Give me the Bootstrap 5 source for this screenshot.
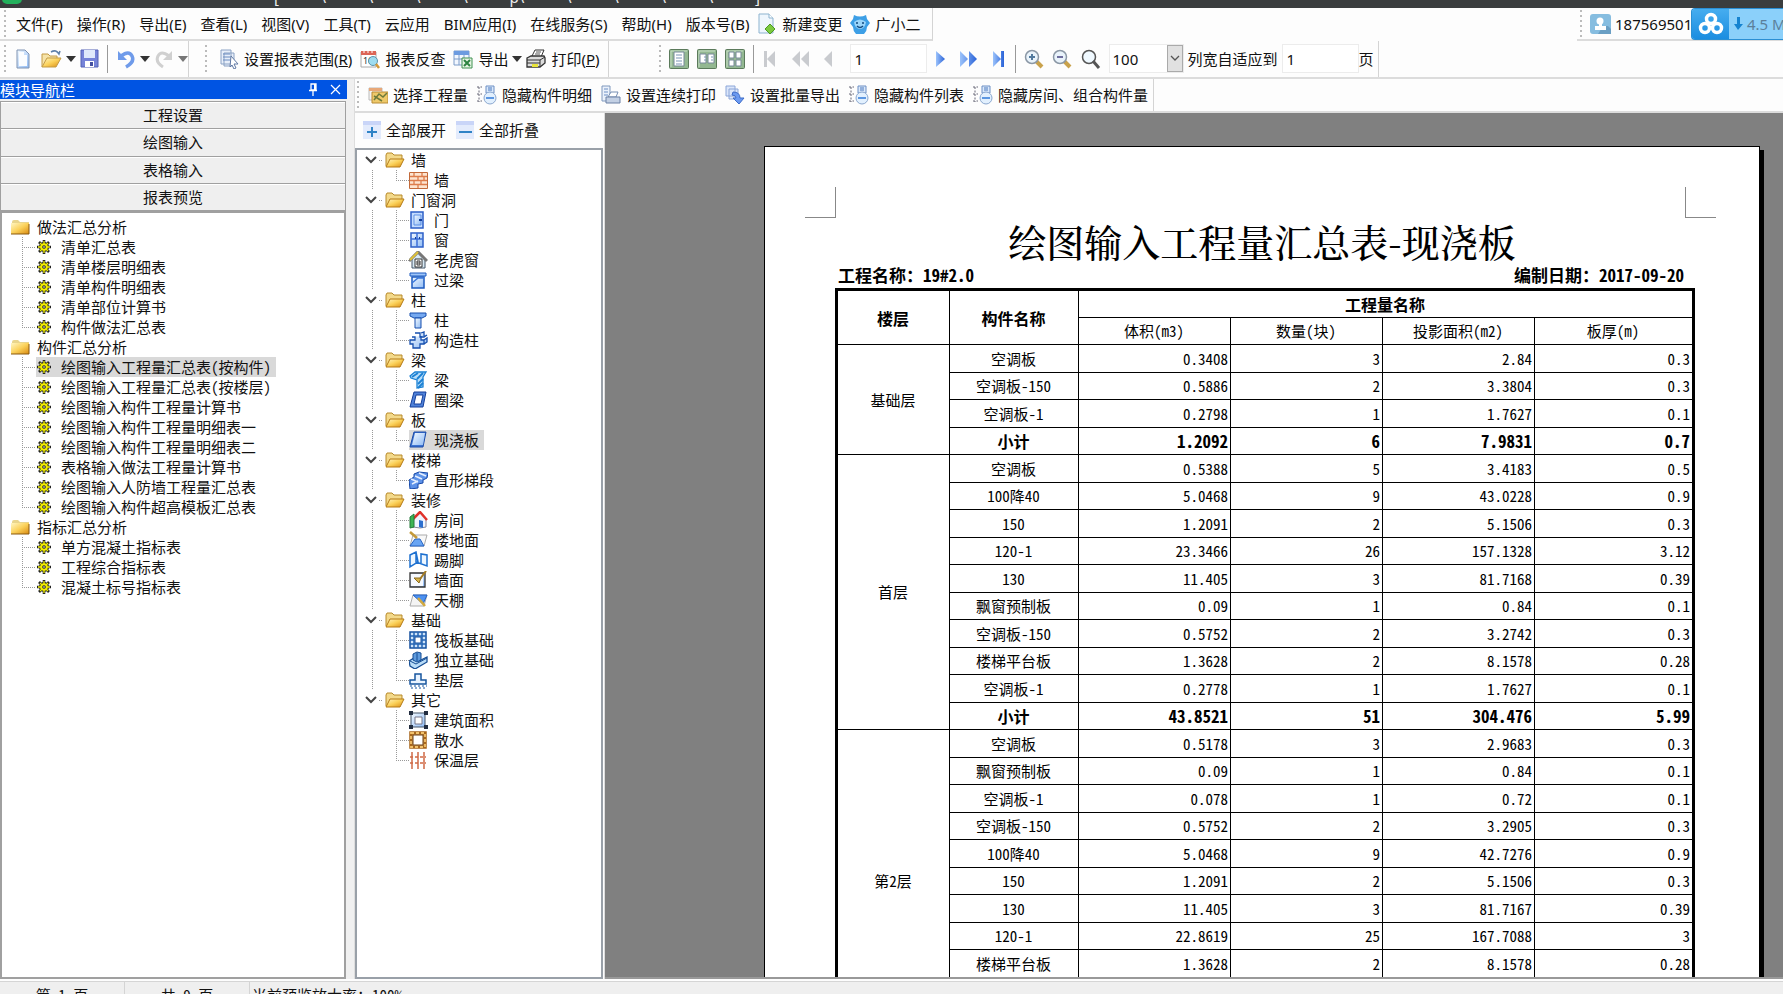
<!DOCTYPE html>
<html lang="zh-CN">
<head>
<meta charset="utf-8">
<meta name="viewport" content="width=device-width, initial-scale=1">
<title>报表预览</title>
<link href="https://cdn.jsdelivr.net/npm/bootstrap@5.3.0/dist/css/bootstrap.min.css" rel="stylesheet">
<style>
  :root { --ui: "Noto Sans", "Noto Sans CJK SC", sans-serif; --song: "Noto Sans Mono CJK SC", "Noto Sans CJK SC", sans-serif; --line: #d4d4d4; }
  body { font: 15px/20px var(--ui); color: #111; background: #fdfdfd; overflow: hidden; }
  button { font: inherit; color: inherit; background: none; border: 0; padding: 0; white-space: nowrap; }
  svg { display: block; flex: none; }
  .app { height: calc(100vh + 14px); }
  .titlebar { height: 8px; background: #3a3d3e; color: #eee; overflow: hidden; padding-left: 2px; flex: none; }
  .titlebar .logo { width: 20px; height: 20px; margin-top: -16px; border-radius: 5px; background: #23b05c; }
  .titlebar .path { margin: -13px 0 0 252px; width: 486px; line-height: 20px; }
  .bar { flex: none; }
  .menubar { height: 33px; }
  .toolbar { height: 38px; border-bottom: 2px solid #dcdcdc; }
  .toolbar .strip { padding-bottom: 1px; }
  .strip { border-right: 1px solid var(--line); height: 100%; }
  .menubar .strip { border-bottom: 2px solid #dcdcdc; }
  .grip { width: 2px; height: 28px; flex: none; background: repeating-linear-gradient(#bbb 0 2px, transparent 2px 5px); }
  .menus { gap: 14px; padding-left: 10px; }
  .tool { display: flex; align-items: center; gap: 5px; }
  .view-group { padding-left: 50px; }
  .sep { width: 1px; height: 28px; background: #999; flex: none; }
  .caret { width: 0; height: 0; border: 5px solid transparent; border-top: 6px solid #333; border-bottom: 0; }
  .caret.dim { border-top-color: #777; }
  .field { border: 1px solid #ececec; height: 29px; width: 77px; padding: 0 4px; background: #fff; font: inherit; color: #111; border-radius: 0; }
  select.field { width: 75px; appearance: none; padding: 0 3px; background: #fff url("data:image/svg+xml,%3Csvg xmlns='http://www.w3.org/2000/svg' width='16' height='27'%3E%3Crect x='.5' y='.5' width='15' height='26' fill='%23e1e1e1' stroke='%23aaa'/%3E%3Cpath d='M4 11l4 4 4-4' fill='none' stroke='%23555' stroke-width='1.3'/%3E%3C/svg%3E") right 0 / 16px 27px no-repeat; }
  .disk { width: 92px; height: 32px; border-radius: 4px 0 0 4px; overflow: hidden; background: #8bd0fa; border: 1px solid #2a8fd4; border-right: 0; color: #5b7f9a; }
  .disk-logo { width: 37px; height: 100%; background: linear-gradient(#46adef, #1b8de0); flex: none; }
  .account { width: 206px; flex: none; border-bottom: 2px solid #dcdcdc; height: 100%; padding-left: 3px; }
  .account .number { width: 76px; overflow: visible; }
  .workspace { background: #f0f0f0; min-height: 0; }
  .side { width: 347px; flex: none; font-family: var(--song); padding-top: 1px; }
  .side-head { height: 19px; background: #0054e3; color: #fff; line-height: 18px; padding-right: 6px; gap: 12px; }
  .sections { display: grid; grid-template-rows: repeat(4, 1fr); height: 110px; margin: 2px 1px 0 0; border: 1px solid #a0a0a0; border-bottom-width: 0; }
  .sections button { border-bottom: 1px solid #a0a0a0; background: #efefef; box-shadow: inset 0 1px #fff; }
  .side-tree { border: 2px solid #a0a0a0; background: #fff; margin-right: 1px; padding: 4px 0 0 9px; min-height: 0; }
  .tree, .tree ul { list-style: none; margin: 0; padding: 0; }
  .tree-row { display: flex; align-items: center; height: 20px; white-space: nowrap; }
  .tree-row button { display: flex; align-items: center; height: 20px; }
  .branch { width: 14px; height: 20px; flex: none; background: repeating-linear-gradient(#999 0 1px, transparent 1px 2px) 0 0 / 1px 100% no-repeat, repeating-linear-gradient(90deg, #999 0 1px, transparent 1px 2px) 0 10px / 100% 1px no-repeat; }
  li:last-child > .branch { background-size: 1px 10px, 100% 1px; }
  .side-tree ul ul { padding-left: 11px; }
  .side-tree ul ul button { gap: 10px; padding: 0 5px 0 1px; }
  .side-tree .folder { gap: 7px; }
  .picked { background: #d9d9d9; }
  .work { margin-left: 7px; background: #fdfdfd; min-width: 0; border-left: 1px solid #ddd; }
  .toolbar3 { height: 34px; border-bottom: 2px solid #dcdcdc; padding-left: 2px; }
  .toolbar3 .tools { gap: 9px; padding: 0 5px 0 9px; }
  .panes { min-height: 0; }
  .parts { width: 250px; flex: none; border-right: 1px solid #ddd; }
  .parts-bar { height: 35px; padding: 0 0 2px 8px; gap: 10px; flex: none; }
  .parts-tree { border: 2px solid #99a0a8; background: #fff; padding: 0 0 0 8px; font-family: var(--song); margin-right: 1px; min-height: 0; overflow: hidden; }
  .parts-tree .folder { gap: 6px; }
  .chev { width: 12px; margin-right: 2px; }
  .stub { width: 4px; height: 1px; background: repeating-linear-gradient(90deg, #999 0 1px, transparent 1px 2px); margin-right: -2px; }
  .parts-tree ul ul { margin-left: 7px; padding-left: 24px; background: repeating-linear-gradient(#999 0 1px, transparent 1px 2px) 0 0 / 1px 100% no-repeat; }
  .parts-tree > ul > li:last-child ul { background: none; }
  .parts-tree ul ul button { gap: 6px; padding-right: 5px; margin-left: -1px; }
  .canvas { background: #808080; padding: 33px 19px 0 159px; min-width: 0; overflow: hidden; border-bottom: 2px solid #999; }
  .sheet { background: #fff; border: 1px solid #000; margin-right: 4px; box-shadow: 4px 4px 0 #000; height: 1200px; font-family: var(--song); color: #000; padding-top: 40px; }
  .marks { padding: 0 43px 0 40px; }
  .marks i { width: 31px; height: 31px; border: solid #888; border-width: 0 1px 1px 0; }
  .marks i + i { border-width: 0 0 1px 1px; }
  .sheet h1 { font: 500 38px/46px "Noto Serif CJK SC", "Noto Sans CJK SC", sans-serif; margin: 0; text-align: center; white-space: nowrap; }
  .meta { font-size: 17px; font-weight: 700; line-height: 22px; padding: 0 75px 0 73px; }
  .report { table-layout: fixed; width: calc(100% - 134px); margin: 2px 0 0 70px; border-collapse: collapse; border: 3px solid #000; }
  .report th, .report td { border: 1px solid #000; padding: 0 2px 0 1px; line-height: 20px; text-align: right; font-weight: 400; white-space: nowrap; }
  .report tr { height: 27px; }
  .report tr:nth-child(odd) { height: 28px; }
  .report thead th, .report tbody th, .report .floor { text-align: center; }
  .report thead tr:first-child th, .report .sum > * { font-weight: 700; font-size: 16px; }
  .report .sum > td { font-size: 17px; }
  .statusbar { height: 27px; background: #efefef; border-top: 1px solid #d5d5d5; font-family: var(--song); flex: none; margin-top: 2px; }
  .statusbar span { width: 125px; padding-top: 3px; text-align: center; border-right: 1px solid var(--line); height: 100%; }
  .statusbar span:last-child { width: auto; border: 0; padding-left: 2px; }
</style>
</head>
<body>
<svg width="0" height="0" class="position-absolute" aria-hidden="true">
  <defs>
    <linearGradient id="gold" x1="0" y1="0" x2="1" y2="1"><stop offset="0" stop-color="#fff6c4"/><stop offset=".5" stop-color="#fbd15a"/><stop offset="1" stop-color="#d98a10"/></linearGradient>
    <linearGradient id="blue" x1="0" y1="0" x2="1" y2="1"><stop offset="0" stop-color="#f4faff"/><stop offset="1" stop-color="#8fbbf5"/></linearGradient>
    <linearGradient id="arrow" x1="0" y1="0" x2="1" y2="0"><stop offset="0" stop-color="#9cc3fb"/><stop offset="1" stop-color="#2a63d8"/></linearGradient>
    <symbol id="closed" viewBox="0 0 19 16"><path d="M1 3q0-2 2-2h4l2 2h9v11H1z" fill="#e9d58c"/><path d="M0 4h18v11H0z" fill="url(#gold)"/><path d="M0 15h18V5" fill="none" stroke="#8a5a10"/></symbol>
    <symbol id="open" viewBox="0 0 20 16"><path d="M1 14V3l1-2h5l2 2h8v4" fill="#f3d98a" stroke="#b88a2a"/><path d="M1 15L5 7h14l-4 8z" fill="url(#gold)" stroke="#b47b18"/></symbol>
    <symbol id="gear" viewBox="0 0 14 14"><path d="M7 0v14M0 7h14M2 2l10 10M12 2L2 12" stroke="#222" stroke-width="2.6"/><circle cx="7" cy="7" r="5" fill="#222"/><path d="M7 1v12M1 7h12M3 3l8 8M11 3l-8 8" stroke="#ee0" stroke-width="1.3"/><circle cx="7" cy="7" r="3.8" fill="#f4ef00"/><circle cx="7" cy="7" r="1.8" fill="#222"/><circle cx="7" cy="7" r=".8" fill="#fff"/></symbol>
    <symbol id="chevron" viewBox="0 0 12 8"><path d="M1 1l5 5 5-5" fill="none" stroke="#444" stroke-width="2"/></symbol>
    <symbol id="wall" viewBox="0 0 19 18"><path d="M.5 1.500h18v16H.5z" fill="#fde5d0" stroke="#c26a3a"/><path d="M1 5.500h17M1 9.500h17M1 13.500h17M5 2v4M13 2v4M9 6v4M15 6v4M5 10v4M12 10v4M9 14v3" stroke="#dd7d4b" stroke-width="1.300"/></symbol>
    <symbol id="door" viewBox="0 0 19 18"><path d="M2 1h12v16H2z" fill="#c5ddff" stroke="#2c5fc8" stroke-width="1.500"/><path d="M5 4h7v10H5z" fill="url(#blue)" stroke="#5d8fe4"/><path d="M10 9h3" stroke="#123f9c" stroke-width="2"/></symbol>
    <symbol id="window" viewBox="0 0 19 18"><path d="M2 2h12v14H2z" fill="url(#blue)" stroke="#2c5fc8" stroke-width="1.500"/><path d="M8 2v14M2 8h12" stroke="#3c6fd8" stroke-width="1.500"/><path d="M6 7h1M10 7h1" stroke="#123f9c" stroke-width="2"/></symbol>
    <symbol id="dormer" viewBox="0 0 19 18"><path d="M3 8l6-6 7 6v9H3z" fill="#d8e9f4" stroke="#456"/><path d="M0 10l9-9 9 9" fill="none" stroke="#777" stroke-width="3"/><path d="M1 9l8-8" stroke="#dfc23a" stroke-width="2"/><path d="M6 8h7v8H6zM8 10h3v4H8zM8 12h3" fill="#fff" stroke="#333"/></symbol>
    <symbol id="lintel" viewBox="0 0 19 18"><path d="M1 2h16v3H1z" fill="#9ec5f8" stroke="#1d5bc0"/><path d="M3 6h12v11H3z" fill="url(#blue)" stroke="#1d5bc0" stroke-width="1.500"/><path d="M3 12l6-5h6" stroke="#3b78da" fill="none" stroke-width="1.500"/></symbol>
    <symbol id="column" viewBox="0 0 19 18"><path d="M1 2h16v3l-4 2H5L1 5z" fill="#76a9f0" stroke="#164fae"/><path d="M6 7h6v10H6z" fill="url(#blue)" stroke="#164fae"/></symbol>
    <symbol id="tiecol" viewBox="0 0 19 18"><path d="M6 2h5v4h4l3-2M3 6h3v3H1v4h3v4h7v-4h4V9h-3V5M12 2l3-1v4M15 9l3-2v4l-3 2" fill="url(#blue)" stroke="#164fae" stroke-width="1.300"/></symbol>
    <symbol id="beam" viewBox="0 0 19 18"><path d="M1 5l5-4h11l-3 5v10l-6 1V9L2 7z" fill="#b8ddfa" stroke="#1b81d4" stroke-width="1.300"/><path d="M3 6l6-4M8 8l6-6M9 13l5-5M9 17l5-5" stroke="#1b81d4" stroke-width="1.800"/></symbol>
    <symbol id="ring" viewBox="0 0 19 18"><path d="M5 1h12l-3 15H1z" fill="#4f81d8" stroke="#153f9a"/><path d="M7 4h7l-2 9H5z" fill="#fff" stroke="#153f9a"/></symbol>
    <symbol id="slab" viewBox="0 0 19 18"><path d="M5 1h12l-3 15H1z" fill="#3d74d2" stroke="#1b4ba8"/><path d="M6 2h10l-2 12H3z" fill="url(#blue)"/></symbol>
    <symbol id="stair" viewBox="0 0 19 18"><path d="M0 9l5-3V3l5-2 9 1-1 5-4 2v3l-5 1v4L1 18z" fill="#5e92e8" stroke="#1648a8"/><path d="M2 8l7 3M6 5l7 3M10 2l7 3M3 13l6-3" stroke="#e6f0ff" stroke-width="1.500"/></symbol>
    <symbol id="room" viewBox="0 0 19 18"><path d="M4 8l7-6 6 6v8l-6 1-7-1z" fill="#eef4ff" stroke="#889"/><path d="M3 9l8-8 7 8" fill="none" stroke="#e0312a" stroke-width="2.500"/><path d="M1 6l4-3v13l-4 1z" fill="#3db554" stroke="#24793a"/><path d="M10 9l4 1v7l-4-1z" fill="#2d6fce"/></symbol>
    <symbol id="floor" viewBox="0 0 19 18"><path d="M4 4h14l-3 11H1z" fill="#f8f8f8" stroke="#aaa"/><path d="M1 15l5-7h5l4 7z" fill="#69a5f3" stroke="#2463c4"/><path d="M1 1l7 6" stroke="#c49a3a" stroke-width="2.500"/></symbol>
    <symbol id="skirt" viewBox="0 0 19 18"><path d="M1 4l6-3 2 10-8 5zM7 1v10l11 4V4l-6-1v9" fill="#eef7ff" stroke="#1d70d0" stroke-width="1.500"/></symbol>
    <symbol id="face" viewBox="0 0 19 18"><path d="M1 2h15v14H1z" fill="url(#blue)" stroke="#333" stroke-width="1.300"/><path d="M2 3h12v12H2z" fill="#f6f9ff"/><path d="M5 7l5 5 2-5z" fill="#d6b24b" stroke="#8b6b1e"/><path d="M11 8l6-8" stroke="#a57c24" stroke-width="2"/></symbol>
    <symbol id="ceil" viewBox="0 0 19 18"><path d="M4 4h14l-3 11H1z" fill="#f4f4f4" stroke="#aaa"/><path d="M4 4h14l-4 9z" fill="#4e92f0" stroke="#2463c4"/><path d="M9 7l7 8" stroke="#d3a93d" stroke-width="2.500"/></symbol>
    <symbol id="raft" viewBox="0 0 19 18"><path d="M1 1h16v16H1z" fill="#cfe4fa" stroke="#134f9e" stroke-width="1.500"/><path d="M5 1v16M13 1v16M1 5h16M1 13h16M9 1v4M9 13v4M1 9h4M13 9h4" stroke="#2464b4" stroke-width="1.500"/><path d="M6 6h6v6H6z" fill="#fff" stroke="#134f9e"/></symbol>
    <symbol id="pad" viewBox="0 0 19 18"><path d="M0 10l5-3 5 3 8-4v5L6 18l-5-3z" fill="#b9dcf7" stroke="#154d94" stroke-width="1.300"/><path d="M4 3l4-2 4 1v7l-4 2-4-2zM8 2v8" fill="#5f9bdd" stroke="#154d94"/><path d="M1 10l6 3 11-6" fill="none" stroke="#154d94"/></symbol>
    <symbol id="cushion" viewBox="0 0 19 18"><path d="M6 3h6v6h5v4H1V9h5z" fill="#eaf4ff" stroke="#17559f" stroke-width="1.500"/><path d="M1 15h17M2 17h16" stroke="#17559f" stroke-dasharray="2 2"/></symbol>
    <symbol id="area" viewBox="0 0 19 18"><path d="M2 2h14v14H2z" fill="url(#blue)" stroke="#456"/><path d="M6 6h7v7H6z" fill="#fff" stroke="#778"/><path d="M0 0h4v4H0zM15 0h4v4h-4zM0 14h4v4H0zM15 14h4v4h-4z" fill="#222d40"/></symbol>
    <symbol id="apron" viewBox="0 0 19 18"><path d="M2 2h14v14H2z" fill="#fff" stroke="#a8661a" stroke-width="3.500"/><path d="M2 2h14v14H2z" fill="none" stroke="#f2c26c" stroke-width="1.800" stroke-dasharray="3 2"/><path d="M4 4h10v10H4z" fill="none" stroke="#70410c"/></symbol>
    <symbol id="insul" viewBox="0 0 19 18"><path d="M3 1v17M9 1v17M15 1v17" stroke="#cf6a45" stroke-width="1.500"/><path d="M1 6h16M1 12h16" stroke="#cf6a45" stroke-dasharray="3 2" stroke-width="1.500"/></symbol>
    <symbol id="hide" viewBox="0 0 20 20"><path d="M0 2h5M0 9h5M0 16h5M2 2v15" stroke="#667" stroke-dasharray="2 1.500"/><path d="M9 1h8v7H9z" fill="#dbe9fb" stroke="#6d8fc4"/><path d="M11 3h4M11 5h4" stroke="#4b78bd"/><circle cx="13" cy="13" r="6" fill="#e2f0fe" stroke="#8aa7cf"/><path d="M9 13h8" stroke="#2f7ad8" stroke-width="1.500"/></symbol>
    <symbol id="glass" viewBox="0 0 20 20"><path d="M12 12l6 6" stroke="#c9a24c" stroke-width="4"/><circle cx="8" cy="8" r="6.500" fill="#e9f3fb" stroke="#8a97a5" stroke-width="1.500"/></symbol>
    <symbol id="sheetbg" viewBox="0 0 20 20"><rect x=".5" y=".5" width="19" height="19" rx="1" fill="#93b891" stroke="#5b7a5b"/><path d="M2 18V2h16" stroke="#c7dec5" fill="none"/></symbol>
  </defs>
</svg>

<div class="app d-flex flex-column">
  <header class="titlebar d-flex">
    <div class="logo"></div>
    <div class="path d-flex justify-content-between"><span>[</span><span>\</span><span>\</span><span>\</span><span>\</span><span>p\</span><span>\</span><span>\</span><span>\</span><span>\</span><span>]</span></div>
  </header>

  <nav class="bar menubar d-flex justify-content-between">
    <div class="strip d-flex align-items-center ps-1 pe-2">
      <span class="grip"></span>
      <div class="menus d-flex align-items-center">
        <button>文件(F)</button><button>操作(R)</button><button>导出(E)</button><button>查看(L)</button><button>视图(V)</button><button>工具(T)</button><button>云应用</button><button>BIM应用(I)</button><button>在线服务(S)</button><button>帮助(H)</button><button>版本号(B)</button>
      </div>
      <button class="tool ms-2"><svg width="20" height="22" viewBox="0 0 20 22"><path d="M2 1h10l4 4v15H2z" fill="#eef6fd" stroke="#8db3cf"/><path d="M12 1v4h4" fill="#fff" stroke="#8db3cf"/><path d="M13 11l5 5-5 5-5-5z" fill="#7cc93f" stroke="#4c9a23"/></svg>新建变更</button>
      <button class="tool ms-2 me-1"><svg width="20" height="22" viewBox="0 0 20 22"><path d="M4 2q6 3 12 0l1 4 3 4-3 4q0 4-3 7H6q-3-3-3-7L0 10l3-4z" fill="#3d9fe6"/><path d="M4 9q6-5 12 0-1 7-6 7T4 9z" fill="#9bd5fa"/><path d="M7 9v2M13 9v2M7 13q3 3 6 0" stroke="#124a80" stroke-width="1.500" fill="none"/></svg>广小二</button>
    </div>
    <div class="account d-flex align-items-center">
      <span class="grip"></span>
      <svg class="ms-2 me-1" width="21" height="20" viewBox="0 0 21 20"><rect width="21" height="20" rx="3" fill="#86bde0"/><path d="M13 12h5l3 3v5H8z" fill="#6a9fc4"/><circle cx="10" cy="7" r="3.500" fill="#fff"/><path d="M9 9h3v4H9zM5 12h11v4H5z" fill="#fff"/></svg>
      <span class="number">187569501</span>
      <button class="disk d-flex align-items-center position-relative"><span class="disk-logo d-flex align-items-center justify-content-center"><svg width="26" height="24" viewBox="0 0 26 24"><g fill="none" stroke="#fff" stroke-width="3.500"><circle cx="13" cy="7" r="4.500"/><circle cx="7" cy="16" r="4.500"/><circle cx="19" cy="16" r="4.500"/></g></svg></span><svg class="ms-1" width="10" height="14" viewBox="0 0 10 14"><path d="M4 0h3v7h3l-5 6-4-6h3z" fill="#1583d0"/></svg><span class="ms-1">4.5 M</span></button>
    </div>
  </nav>

  <div class="bar toolbar d-flex">
    <div class="strip d-flex align-items-center ps-1">
      <span class="grip me-2"></span>
      <button aria-label="新建"><svg width="18" height="20" viewBox="0 0 18 20"><path d="M3 1h8l4 4v14H3z" fill="url(#blue)" stroke="#7f93b2"/><path d="M5 3h5v3h3v11H5z" fill="#fbfdff"/></svg></button>
      <button aria-label="打开" class="ms-2"><svg width="22" height="20" viewBox="1 0 22 20"><path d="M3 18V5h6l2 2h7v4" fill="#f6e3a8" stroke="#c49b45"/><path d="M3 18L8 9h14l-5 9z" fill="url(#gold)" stroke="#c49b45"/><path d="M12 3q5-3 8 2l1-3" fill="none" stroke="#5e7fa8" stroke-width="1.500"/></svg></button>
      <span class="caret ms-1"></span>
      <button aria-label="保存" class="ms-1"><svg width="19" height="19" viewBox="0 0 19 19"><path d="M1 1h17v17H1z" fill="#7583d8" stroke="#5361b5"/><path d="M4 1h11v8H4z" fill="#dfe9fb"/><path d="M5 12h9v6H5z" fill="#fff"/><path d="M10 13h3v4h-3z" fill="#4450a0"/></svg></button>
      <span class="sep ms-2 me-2"></span>
      <button aria-label="撤销"><svg width="20" height="20" viewBox="0 0 20 20"><path d="M5 7q8-6 11 0t-6 11" fill="none" stroke="#6f9bea" stroke-width="3.500"/><path d="M2 2v9h9z" fill="#6f9bea"/></svg></button>
      <span class="caret ms-1 me-1"></span>
      <button aria-label="重做"><svg width="20" height="20" viewBox="0 0 20 20"><path d="M15 7q-8-6-11 0t5 11" fill="none" stroke="#d0d0d0" stroke-width="3"/><path d="M18 2v9H9z" fill="#d0d0d0"/></svg></button>
      <span class="caret dim ms-1"></span>
    </div>
    <div class="strip d-flex align-items-center ps-3 pe-2">
      <span class="grip me-2"></span>
      <button class="tool ms-1"><svg width="20" height="20" viewBox="0 0 20 20"><path d="M2 1h10v14H2zM5 4h10v13H5z" fill="#e8effa" stroke="#8ba2c4"/><path d="M4 5h7M4 8h7M4 11h7" stroke="#6b8cc0"/><path d="M12 7l7 8h-4l2 4-2 1-2-4-2 2z" fill="#fff" stroke="#6179a4"/></svg><span>设置报表范围(<u>R</u>)</span></button>
      <button class="tool ms-2"><svg width="20" height="20" viewBox="0 0 20 20"><path d="M1 3h15v15H1z" fill="#fff" stroke="#aaa"/><path d="M1 2h15v4H1z" fill="#dc6657"/><path d="M4 0v4M8 0v4M12 0v4" stroke="#fff"/><text x="3" y="15" font-size="9" fill="#333">10</text><circle cx="13" cy="12" r="4.500" fill="#9edcf0" stroke="#5b94ad"/><path d="M16 15l3 4" stroke="#d39a3a" stroke-width="2.500"/></svg>报表反查</button>
      <button class="tool ms-2"><svg width="20" height="20" viewBox="0 0 20 20"><path d="M1 2h15v14H1z" fill="#f2f7ff" stroke="#7d9cc8"/><path d="M1 2h15v4H1z" fill="#6c9be0"/><path d="M1 10h15M6 6v10M11 6v10" stroke="#7d9cc8"/><path d="M9 9h10v10H9z" fill="#e7f5e4" stroke="#3f9150"/><path d="M11 11l6 6M17 11l-6 6" stroke="#2d8341" stroke-width="2"/></svg>导出</button>
      <span class="caret ms-1 me-1"></span>
      <button class="tool"><svg width="20" height="20" viewBox="0 0 20 20"><path d="M6 7l3-6h9l-3 7" fill="#fff" stroke="#333"/><path d="M10 3h5M9 5h5" stroke="#555"/><path d="M1 9l4-2h13l1 2v5l-5 4H1z" fill="#dcdcdc" stroke="#333" stroke-width="1.300"/><path d="M1 11h13l5-3M1 14h13M14 11v7" stroke="#333" fill="none"/><path d="M6 15h6v3H6z" fill="#e8e43a"/></svg><span>打印(<u>P</u>)</span></button>
    </div>
    <div class="strip view-group d-flex align-items-center">
      <span class="grip me-2"></span>
      <button aria-label="单页"><svg width="20" height="20"><use href="#sheetbg"/><path d="M5 3h10v14H5z" fill="#fff" stroke="#789"/><path d="M7 6h6M7 9h6M7 12h6M7 15h6" stroke="#7a94b5"/></svg></button>
      <button aria-label="双页" class="ms-2"><svg width="20" height="20"><use href="#sheetbg"/><path d="M3 5h6v9H3zM11 5h6v9h-6z" fill="#fff" stroke="#789"/><path d="M7 8h2M7 11h2M14 8h2M14 11h2" stroke="#7a94b5"/></svg></button>
      <button aria-label="四页" class="ms-2"><svg width="20" height="20"><use href="#sheetbg"/><path d="M4 3h5v6H4zM11 3h5v6h-5zM4 11h5v6H4zM11 11h5v6h-5z" fill="#fff" stroke="#789"/></svg></button>
      <span class="sep ms-2 me-2"></span>
      <button aria-label="首页"><svg width="16" height="18" viewBox="0 0 16 18"><path d="M2 1h3v16H2zM13 1v16L5 9z" fill="#c9cbcf"/></svg></button>
      <button aria-label="快退" class="ms-2 ps-1"><svg width="20" height="18" viewBox="0 0 20 18"><path d="M10 1v16L2 9zM19 1v16l-8-8z" fill="#c9cbcf"/></svg></button>
      <button aria-label="上一页" class="ms-2 ps-1"><svg width="12" height="18" viewBox="0 0 12 18"><path d="M10 1v16L2 9z" fill="#c9cbcf"/></svg></button>
      <input class="field ms-3 me-2" value="1" aria-label="页码">
      <button aria-label="下一页"><svg width="12" height="18" viewBox="0 0 12 18"><path d="M1 1v16l9-8z" fill="url(#arrow)"/></svg></button>
      <button aria-label="快进" class="ms-2 ps-1"><svg width="20" height="18" viewBox="0 0 20 18"><path d="M1 1v16l8-8zM10 1v16l8-8z" fill="url(#arrow)"/></svg></button>
      <button aria-label="末页" class="ms-2 ps-1"><svg width="16" height="18" viewBox="0 0 16 18"><path d="M2 1v16l8-8zM10 1h3v16h-3z" fill="url(#arrow)"/></svg></button>
      <span class="sep ms-2 me-2"></span>
      <button aria-label="放大"><svg width="20" height="20"><use href="#glass"/><path d="M5 8h6M8 5v6" stroke="#527a9e" stroke-width="2"/></svg></button>
      <button aria-label="缩小" class="ms-2"><svg width="20" height="20"><use href="#glass"/><path d="M5 8h6" stroke="#6e6e9e" stroke-width="2"/></svg></button>
      <button aria-label="缩放" class="ms-2 me-2"><svg width="21" height="20" viewBox="0 0 21 20"><circle cx="9" cy="8" r="6.500" fill="#f0f9ff" stroke="#555" stroke-width="1.500"/><path d="M13 12l6 7" stroke="#555" stroke-width="3"/></svg></button>
      <select class="field" aria-label="缩放比例"><option>100</option></select>
      <label class="ms-1 me-1" for="fit">列宽自适应到</label>
      <input class="field" id="fit" value="1"><span class="pe-1">页</span>
    </div>
  </div>

  <main class="workspace d-flex flex-grow-1">
    <aside class="side d-flex flex-column">
      <div class="side-head d-flex align-items-center"><span class="me-auto">模块导航栏</span>
        <button aria-label="固定"><svg width="10" height="13" viewBox="0 0 10 13"><path d="M3 1h5v6H3zM1 7.500h8M5 8v5" fill="none" stroke="#fff" stroke-width="1.300"/><path d="M6 1h2v6H6z" fill="#fff"/></svg></button>
        <button aria-label="关闭"><svg width="11" height="11" viewBox="0 0 11 11"><path d="M1 1l9 9M10 1l-9 9" stroke="#fff" stroke-width="1.200"/></svg></button></div>
      <div class="sections"><button>工程设置</button><button>绘图输入</button><button>表格输入</button><button>报表预览</button></div>
      <div class="side-tree flex-grow-1">
        <ul class="tree">
          <li><div class="tree-row"><button class="folder"><svg width="19" height="16"><use href="#closed"/></svg>做法汇总分析</button></div>
            <ul>
              <li class="tree-row"><span class="branch"></span><button><svg width="14" height="14"><use href="#gear"/></svg>清单汇总表</button></li>
              <li class="tree-row"><span class="branch"></span><button><svg width="14" height="14"><use href="#gear"/></svg>清单楼层明细表</button></li>
              <li class="tree-row"><span class="branch"></span><button><svg width="14" height="14"><use href="#gear"/></svg>清单构件明细表</button></li>
              <li class="tree-row"><span class="branch"></span><button><svg width="14" height="14"><use href="#gear"/></svg>清单部位计算书</button></li>
              <li class="tree-row"><span class="branch"></span><button><svg width="14" height="14"><use href="#gear"/></svg>构件做法汇总表</button></li>
            </ul></li>
          <li><div class="tree-row"><button class="folder"><svg width="19" height="16"><use href="#closed"/></svg>构件汇总分析</button></div>
            <ul>
              <li class="tree-row"><span class="branch"></span><button class="picked"><svg width="14" height="14"><use href="#gear"/></svg>绘图输入工程量汇总表(按构件)</button></li>
              <li class="tree-row"><span class="branch"></span><button><svg width="14" height="14"><use href="#gear"/></svg>绘图输入工程量汇总表(按楼层)</button></li>
              <li class="tree-row"><span class="branch"></span><button><svg width="14" height="14"><use href="#gear"/></svg>绘图输入构件工程量计算书</button></li>
              <li class="tree-row"><span class="branch"></span><button><svg width="14" height="14"><use href="#gear"/></svg>绘图输入构件工程量明细表一</button></li>
              <li class="tree-row"><span class="branch"></span><button><svg width="14" height="14"><use href="#gear"/></svg>绘图输入构件工程量明细表二</button></li>
              <li class="tree-row"><span class="branch"></span><button><svg width="14" height="14"><use href="#gear"/></svg>表格输入做法工程量计算书</button></li>
              <li class="tree-row"><span class="branch"></span><button><svg width="14" height="14"><use href="#gear"/></svg>绘图输入人防墙工程量汇总表</button></li>
              <li class="tree-row"><span class="branch"></span><button><svg width="14" height="14"><use href="#gear"/></svg>绘图输入构件超高模板汇总表</button></li>
            </ul></li>
          <li><div class="tree-row"><button class="folder"><svg width="19" height="16"><use href="#closed"/></svg>指标汇总分析</button></div>
            <ul>
              <li class="tree-row"><span class="branch"></span><button><svg width="14" height="14"><use href="#gear"/></svg>单方混凝土指标表</button></li>
              <li class="tree-row"><span class="branch"></span><button><svg width="14" height="14"><use href="#gear"/></svg>工程综合指标表</button></li>
              <li class="tree-row"><span class="branch"></span><button><svg width="14" height="14"><use href="#gear"/></svg>混凝土标号指标表</button></li>
            </ul></li>
        </ul>
      </div>
    </aside>

    <section class="work d-flex flex-column flex-grow-1">
      <div class="bar toolbar3 d-flex">
        <div class="strip d-flex align-items-center">
          <span class="grip"></span>
          <div class="tools d-flex">
            <button class="tool"><svg width="20" height="20" viewBox="0 0 20 20"><path d="M1 3h13v12H1z" fill="#f4f4f4" stroke="#bbb"/><path d="M1 3h13v3H1z" fill="#e8a878"/><path d="M4 7h16v11H4z" fill="#eec96a" stroke="#b88a35"/><path d="M6 15l5-6 4 3 4-4M6 11l8 5" fill="none" stroke="#6d7a3a" stroke-width="1.500"/></svg>选择工程量</button>
            <button class="tool"><svg width="20" height="20"><use href="#hide"/></svg>隐藏构件明细</button>
            <button class="tool"><svg width="20" height="20" viewBox="0 0 20 20"><path d="M1 1h8v15H1z" fill="#eaf1fb" stroke="#7f98bd"/><path d="M3 4h4M3 7h4M3 10h4" stroke="#6d8fc4"/><path d="M7 12l3-5h7l-2 5z" fill="#fff" stroke="#778fb3"/><path d="M5 12h14v6H5z" fill="#c3d0e4" stroke="#6a80a5"/></svg>设置连续打印</button>
            <button class="tool"><svg width="20" height="20" viewBox="0 0 20 20"><path d="M1 1h9v10H1zM4 4h9v10H4z" fill="#dbe6fa" stroke="#8ca6d8"/><path d="M8 7q7 0 7 6h4l-5 6-6-6h3q0-3-4-3z" fill="#6c9af0" stroke="#3d6cc9"/></svg>设置批量导出</button>
            <button class="tool"><svg width="20" height="20"><use href="#hide"/></svg>隐藏构件列表</button>
            <button class="tool"><svg width="20" height="20"><use href="#hide"/></svg>隐藏房间、组合构件量</button>
          </div>
        </div>
      </div>
      <div class="panes d-flex flex-grow-1">
        <div class="parts d-flex flex-column">
          <div class="parts-bar d-flex align-items-center">
            <button class="tool"><svg width="18" height="18" viewBox="0 0 18 18"><path d="M0 0h18v18H0z" fill="#e3ebfc"/><path d="M0 0h18v4H0z" fill="#c9d5f8"/><path d="M9 6v10M4 11h10" stroke="#2f83c6" stroke-width="2"/></svg>全部展开</button>
            <button class="tool"><svg width="18" height="18" viewBox="0 0 18 18"><path d="M0 0h18v18H0z" fill="#e3ebfc"/><path d="M0 0h18v4H0z" fill="#c9d5f8"/><path d="M3 11h13" stroke="#2f83c6" stroke-width="2"/></svg>全部折叠</button>
          </div>
          <div class="parts-tree flex-grow-1">
            <ul class="tree">
              <li><div class="tree-row"><svg class="chev" height="8"><use href="#chevron"/></svg><span class="stub"></span><button class="folder ms-1"><svg width="20" height="16"><use href="#open"/></svg>墙</button></div>
                <ul><li class="tree-row"><span class="branch"></span><button><svg width="19" height="18"><use href="#wall"/></svg>墙</button></li></ul></li>
              <li><div class="tree-row"><svg class="chev" height="8"><use href="#chevron"/></svg><span class="stub"></span><button class="folder ms-1"><svg width="20" height="16"><use href="#open"/></svg>门窗洞</button></div>
                <ul><li class="tree-row"><span class="branch"></span><button><svg width="19" height="18"><use href="#door"/></svg>门</button></li>
                <li class="tree-row"><span class="branch"></span><button><svg width="19" height="18"><use href="#window"/></svg>窗</button></li>
                <li class="tree-row"><span class="branch"></span><button><svg width="19" height="18"><use href="#dormer"/></svg>老虎窗</button></li>
                <li class="tree-row"><span class="branch"></span><button><svg width="19" height="18"><use href="#lintel"/></svg>过梁</button></li></ul></li>
              <li><div class="tree-row"><svg class="chev" height="8"><use href="#chevron"/></svg><span class="stub"></span><button class="folder ms-1"><svg width="20" height="16"><use href="#open"/></svg>柱</button></div>
                <ul><li class="tree-row"><span class="branch"></span><button><svg width="19" height="18"><use href="#column"/></svg>柱</button></li>
                <li class="tree-row"><span class="branch"></span><button><svg width="19" height="18"><use href="#tiecol"/></svg>构造柱</button></li></ul></li>
              <li><div class="tree-row"><svg class="chev" height="8"><use href="#chevron"/></svg><span class="stub"></span><button class="folder ms-1"><svg width="20" height="16"><use href="#open"/></svg>梁</button></div>
                <ul><li class="tree-row"><span class="branch"></span><button><svg width="19" height="18"><use href="#beam"/></svg>梁</button></li>
                <li class="tree-row"><span class="branch"></span><button><svg width="19" height="18"><use href="#ring"/></svg>圈梁</button></li></ul></li>
              <li><div class="tree-row"><svg class="chev" height="8"><use href="#chevron"/></svg><span class="stub"></span><button class="folder ms-1"><svg width="20" height="16"><use href="#open"/></svg>板</button></div>
                <ul><li class="tree-row"><span class="branch"></span><button class="picked"><svg width="19" height="18"><use href="#slab"/></svg>现浇板</button></li></ul></li>
              <li><div class="tree-row"><svg class="chev" height="8"><use href="#chevron"/></svg><span class="stub"></span><button class="folder ms-1"><svg width="20" height="16"><use href="#open"/></svg>楼梯</button></div>
                <ul><li class="tree-row"><span class="branch"></span><button><svg width="19" height="18"><use href="#stair"/></svg>直形梯段</button></li></ul></li>
              <li><div class="tree-row"><svg class="chev" height="8"><use href="#chevron"/></svg><span class="stub"></span><button class="folder ms-1"><svg width="20" height="16"><use href="#open"/></svg>装修</button></div>
                <ul><li class="tree-row"><span class="branch"></span><button><svg width="19" height="18"><use href="#room"/></svg>房间</button></li>
                <li class="tree-row"><span class="branch"></span><button><svg width="19" height="18"><use href="#floor"/></svg>楼地面</button></li>
                <li class="tree-row"><span class="branch"></span><button><svg width="19" height="18"><use href="#skirt"/></svg>踢脚</button></li>
                <li class="tree-row"><span class="branch"></span><button><svg width="19" height="18"><use href="#face"/></svg>墙面</button></li>
                <li class="tree-row"><span class="branch"></span><button><svg width="19" height="18"><use href="#ceil"/></svg>天棚</button></li></ul></li>
              <li><div class="tree-row"><svg class="chev" height="8"><use href="#chevron"/></svg><span class="stub"></span><button class="folder ms-1"><svg width="20" height="16"><use href="#open"/></svg>基础</button></div>
                <ul><li class="tree-row"><span class="branch"></span><button><svg width="19" height="18"><use href="#raft"/></svg>筏板基础</button></li>
                <li class="tree-row"><span class="branch"></span><button><svg width="19" height="18"><use href="#pad"/></svg>独立基础</button></li>
                <li class="tree-row"><span class="branch"></span><button><svg width="19" height="18"><use href="#cushion"/></svg>垫层</button></li></ul></li>
              <li><div class="tree-row"><svg class="chev" height="8"><use href="#chevron"/></svg><span class="stub"></span><button class="folder ms-1"><svg width="20" height="16"><use href="#open"/></svg>其它</button></div>
                <ul><li class="tree-row"><span class="branch"></span><button><svg width="19" height="18"><use href="#area"/></svg>建筑面积</button></li>
                <li class="tree-row"><span class="branch"></span><button><svg width="19" height="18"><use href="#apron"/></svg>散水</button></li>
                <li class="tree-row"><span class="branch"></span><button><svg width="19" height="18"><use href="#insul"/></svg>保温层</button></li></ul></li>
            </ul>
          </div>
        </div>

        <div class="canvas flex-grow-1">
          <article class="sheet">
            <div class="marks d-flex justify-content-between"><i></i><i></i></div>
            <h1>绘图输入工程量汇总表-现浇板</h1>
            <div class="meta d-flex justify-content-between"><span>工程名称：19#2.0</span><span>编制日期：2017-09-20</span></div>
            <table class="report">
              <colgroup><col style="width:113px"><col style="width:129px"><col style="width:152px"><col style="width:152px"><col style="width:152px"><col></colgroup>
              <thead>
                <tr><th rowspan="2">楼层</th><th rowspan="2">构件名称</th><th colspan="4">工程量名称</th></tr>
                <tr><th>体积(m3)</th><th>数量(块)</th><th>投影面积(m2)</th><th>板厚(m)</th></tr>
              </thead>
              <tbody>
                <tr><td class="floor" rowspan="4">基础层</td><th>空调板</th><td>0.3408</td><td>3</td><td>2.84</td><td>0.3</td></tr>
                <tr><th>空调板-150</th><td>0.5886</td><td>2</td><td>3.3804</td><td>0.3</td></tr>
                <tr><th>空调板-1</th><td>0.2798</td><td>1</td><td>1.7627</td><td>0.1</td></tr>
                <tr class="sum"><th>小计</th><td>1.2092</td><td>6</td><td>7.9831</td><td>0.7</td></tr>
                <tr><td class="floor" rowspan="10">首层</td><th>空调板</th><td>0.5388</td><td>5</td><td>3.4183</td><td>0.5</td></tr>
                <tr><th>100降40</th><td>5.0468</td><td>9</td><td>43.0228</td><td>0.9</td></tr>
                <tr><th>150</th><td>1.2091</td><td>2</td><td>5.1506</td><td>0.3</td></tr>
                <tr><th>120-1</th><td>23.3466</td><td>26</td><td>157.1328</td><td>3.12</td></tr>
                <tr><th>130</th><td>11.405</td><td>3</td><td>81.7168</td><td>0.39</td></tr>
                <tr><th>飘窗预制板</th><td>0.09</td><td>1</td><td>0.84</td><td>0.1</td></tr>
                <tr><th>空调板-150</th><td>0.5752</td><td>2</td><td>3.2742</td><td>0.3</td></tr>
                <tr><th>楼梯平台板</th><td>1.3628</td><td>2</td><td>8.1578</td><td>0.28</td></tr>
                <tr><th>空调板-1</th><td>0.2778</td><td>1</td><td>1.7627</td><td>0.1</td></tr>
                <tr class="sum"><th>小计</th><td>43.8521</td><td>51</td><td>304.476</td><td>5.99</td></tr>
                <tr><td class="floor" rowspan="11">第2层</td><th>空调板</th><td>0.5178</td><td>3</td><td>2.9683</td><td>0.3</td></tr>
                <tr><th>飘窗预制板</th><td>0.09</td><td>1</td><td>0.84</td><td>0.1</td></tr>
                <tr><th>空调板-1</th><td>0.078</td><td>1</td><td>0.72</td><td>0.1</td></tr>
                <tr><th>空调板-150</th><td>0.5752</td><td>2</td><td>3.2905</td><td>0.3</td></tr>
                <tr><th>100降40</th><td>5.0468</td><td>9</td><td>42.7276</td><td>0.9</td></tr>
                <tr><th>150</th><td>1.2091</td><td>2</td><td>5.1506</td><td>0.3</td></tr>
                <tr><th>130</th><td>11.405</td><td>3</td><td>81.7167</td><td>0.39</td></tr>
                <tr><th>120-1</th><td>22.8619</td><td>25</td><td>167.7088</td><td>3</td></tr>
                <tr><th>楼梯平台板</th><td>1.3628</td><td>2</td><td>8.1578</td><td>0.28</td></tr>
                <tr><th></th><td></td><td></td><td></td><td></td></tr>
                <tr><th></th><td></td><td></td><td></td><td></td></tr>
              </tbody>
            </table>
          </article>
        </div>
      </div>
    </section>
  </main>

  <footer class="statusbar d-flex"><span>第 1 页</span><span>共 9 页</span><span>当前预览放大率：100%</span></footer>
</div>
<script src="https://cdn.jsdelivr.net/npm/bootstrap@5.3.0/dist/js/bootstrap.bundle.min.js"></script>
</body>
</html>
